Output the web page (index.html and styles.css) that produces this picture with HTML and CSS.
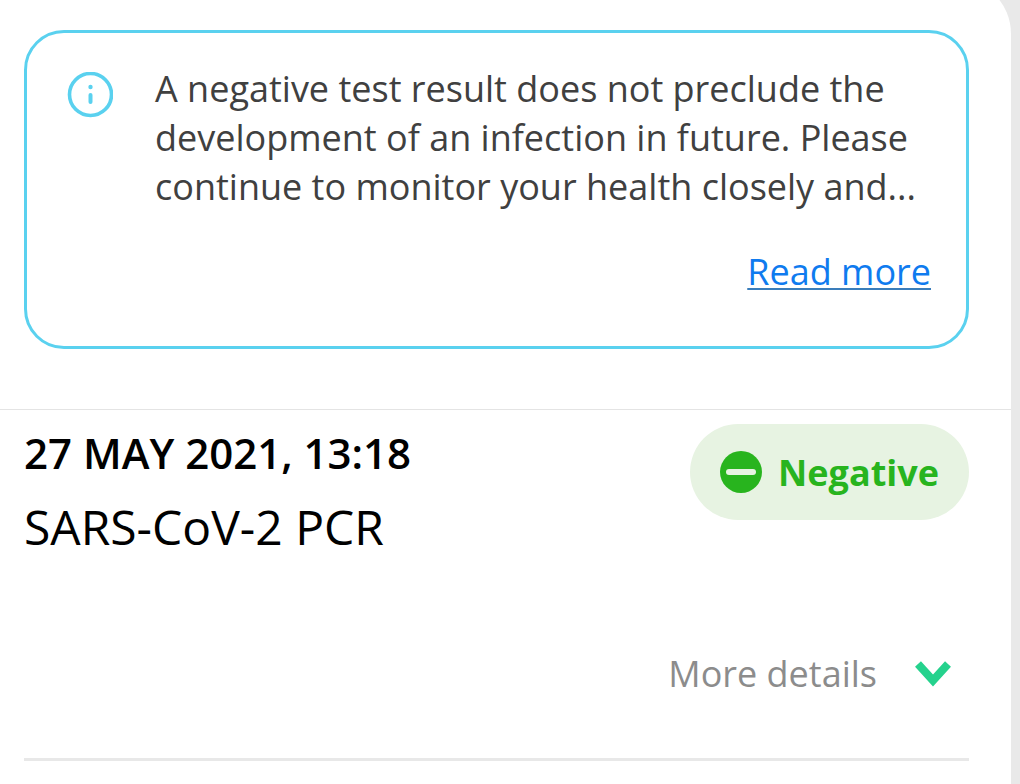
FILE: index.html
```html
<!DOCTYPE html>
<html lang="en">
<head>
    <meta charset="UTF-8">
    <title>Test results</title>
    <link rel="stylesheet" href="styles.css">
</head>
<body>
<main class="sheet">
    <section class="notice">
        <svg class="notice-icon" viewBox="0 0 46 46" aria-hidden="true">
            <circle cx="23.500" cy="22.500" r="21" fill="none" stroke="#5ad1ef" stroke-width="3.6"/>
            <circle cx="23.500" cy="15" r="2.200" fill="#5ad1ef"/>
            <path d="M23.500 23V30" stroke="#5ad1ef" stroke-width="4" stroke-linecap="round"/>
        </svg>
        <div class="notice-body">
            <p class="notice-text">A negative test result does not preclude the development of an infection in future. Please continue to monitor your health closely and...</p>
            <a class="read-more" href="#">Read more</a>
        </div>
    </section>
    <article class="result">
        <div class="result-head">
            <div>
                <h2 class="result-date">27 MAY 2021, 13:18</h2>
                <p class="result-name">SARS-CoV-2 PCR</p>
            </div>
            <div class="badge">
                <svg class="badge-icon" viewBox="0 0 42 42" aria-hidden="true">
                    <circle cx="21" cy="21" r="21" fill="#28b41e"/>
                    <path d="M9 21H33" stroke="#e7f3e2" stroke-width="6" stroke-linecap="round"/>
                </svg>
                <span>Negative</span>
            </div>
        </div>
        <button class="details" type="button">
            <span>More details</span>
            <svg class="details-icon" viewBox="0 0 36 28" aria-hidden="true">
                <path d="M3 4L18 20.500L33 4" fill="none" stroke="#25d28d" stroke-width="8"/>
            </svg>
        </button>
    </article>
</main>
</body>
</html>
```
FILE: styles.css
```css
* {
    box-sizing: border-box;
}
body {
    margin: 0;
    background: #e9e9e9;
    font-family: "Open Sans", "Noto Sans", sans-serif;
    color: #000;
}
h2, p {
    margin: 0;
}
/* the rounded top of the sheet starts above the window */
.sheet {
    min-height: calc(100vh + 22px);
    margin: -22px 9px 0 0;
    padding-top: 52px;
    background: #fff;
    border-top-right-radius: 56px;
}
.notice {
    display: flex;
    gap: 42px;
    margin: 0 42px 60px 24px;
    padding: 31px 33px 50px 40px;
    border: 3px solid #5ad1ef;
    border-radius: 40px;
}
.notice-icon {
    flex: none;
    width: 46px;
    height: 46px;
    margin-top: 8px;
}
.notice-body {
    display: flex;
    flex-direction: column;
    flex: 1;
    gap: 36px;
}
.notice-text {
    color: #404040;
    font-size: 36px;
    line-height: 49px;
}
.read-more {
    align-self: flex-end;
    padding-right: 2px;
    color: #0f7bef;
    font-size: 36px;
    line-height: 49px;
    text-decoration-color: #3a7dbb;
    text-decoration-thickness: 2px;
    text-underline-offset: 3px;
}
.result {
    padding: 14px 42px 0 24px;
    border-top: 1px solid #e4e4e4;
}
.result-head {
    display: flex;
    justify-content: space-between;
    align-items: flex-start;
}
.result-date {
    font-size: 42px;
    font-weight: 600;
    line-height: 58px;
}
.result-name {
    margin-top: 12px;
    font-size: 48px;
    line-height: 66px;
}
.badge {
    display: flex;
    align-items: center;
    gap: 16px;
    height: 96px;
    padding: 0 30px;
    border-radius: 48px;
    background: #e7f3e2;
    color: #28b41e;
    font-size: 36px;
    font-weight: 700;
}
.badge-icon {
    width: 42px;
    height: 42px;
}
.details {
    display: flex;
    justify-content: flex-end;
    align-items: center;
    gap: 38px;
    width: 100%;
    margin-top: 89px;
    padding: 0 18px 60px;
    border: 0;
    border-bottom: 3px solid #e8e8e8;
    background: none;
    color: #8c8c8c;
    font: inherit;
    font-size: 36px;
    line-height: 49px;
}
.details-icon {
    width: 36px;
    height: 28px;
}
```
